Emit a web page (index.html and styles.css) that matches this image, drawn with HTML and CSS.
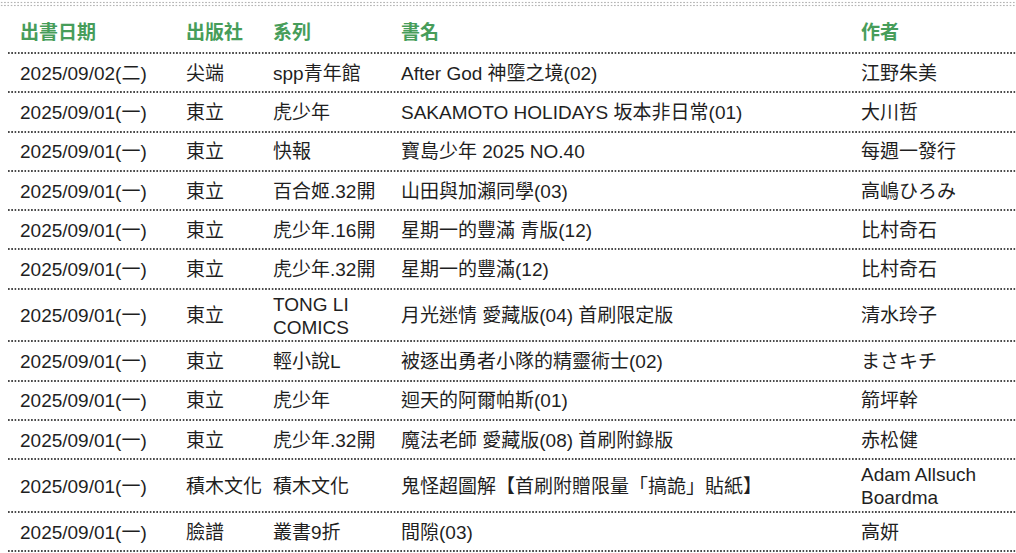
FILE: index.html
```html
<!DOCTYPE html>
<html lang="zh-Hant">
<head>
<meta charset="utf-8">
<title>新書列表</title>
<link rel="stylesheet" href="styles.css">
</head>
<body>
<div class="top-dots"></div>
<table class="list">
  <colgroup>
    <col class="c-date"><col class="c-pub"><col class="c-series"><col class="c-title"><col class="c-author">
  </colgroup>
  <thead>
    <tr><th>出書日期</th><th>出版社</th><th>系列</th><th>書名</th><th>作者</th></tr>
  </thead>
  <tbody>
    <tr><td>2025/09/02(二)</td><td>尖端</td><td>spp青年館</td><td>After God 神墮之境(02)</td><td>江野朱美</td></tr>
    <tr><td>2025/09/01(一)</td><td>東立</td><td>虎少年</td><td>SAKAMOTO HOLIDAYS 坂本非日常(01)</td><td>大川哲</td></tr>
    <tr><td>2025/09/01(一)</td><td>東立</td><td>快報</td><td>寶島少年 2025 NO.40</td><td>每週一發行</td></tr>
    <tr><td>2025/09/01(一)</td><td>東立</td><td>百合姬.32開</td><td>山田與加瀨同學(03)</td><td>高嶋ひろみ</td></tr>
    <tr><td>2025/09/01(一)</td><td>東立</td><td>虎少年.16開</td><td>星期一的豐滿 青版(12)</td><td>比村奇石</td></tr>
    <tr><td>2025/09/01(一)</td><td>東立</td><td>虎少年.32開</td><td>星期一的豐滿(12)</td><td>比村奇石</td></tr>
    <tr><td>2025/09/01(一)</td><td>東立</td><td>TONG LI COMICS</td><td>月光迷情 愛藏版(04) 首刷限定版</td><td>清水玲子</td></tr>
    <tr><td>2025/09/01(一)</td><td>東立</td><td>輕小說L</td><td>被逐出勇者小隊的精靈術士(02)</td><td>まさキチ</td></tr>
    <tr><td>2025/09/01(一)</td><td>東立</td><td>虎少年</td><td>迴天的阿爾帕斯(01)</td><td>箭坪幹</td></tr>
    <tr><td>2025/09/01(一)</td><td>東立</td><td>虎少年.32開</td><td>魔法老師 愛藏版(08) 首刷附錄版</td><td>赤松健</td></tr>
    <tr><td>2025/09/01(一)</td><td>積木文化</td><td>積木文化</td><td>鬼怪超圖解【首刷附贈限量「搞詭」貼紙】</td><td>Adam Allsuch Boardma</td></tr>
    <tr><td>2025/09/01(一)</td><td>臉譜</td><td>叢書9折</td><td>間隙(03)</td><td>高妍</td></tr>
  </tbody>
</table>
</body>
</html>
```
FILE: styles.css
```css
html, body {
  margin: 0;
  padding: 0;
  background: #ffffff;
}
body {
  font-family: "Liberation Sans", Arial, "Noto Sans CJK TC", sans-serif;
  font-size: 19px;
  color: #1f1f1f;
  overflow: hidden;
}
.top-dots {
  height: 6px;
  margin-top: 1px;
  margin-bottom: 1px;
  background-image: radial-gradient(circle, #b5b5b5 0.8px, transparent 1.1px);
  background-size: 3.3px 3px;
}
.list {
  margin-left: 8px;
  width: 1008px;
  border-collapse: collapse;
  table-layout: fixed;
}
.c-date { width: 166px; }
.c-pub { width: 87px; }
.c-series { width: 128px; }
.c-title { width: 460px; }
.c-author { width: 167px; }
.list th,
.list td {
  text-align: left;
  padding: 2px 0 2px 12px;
  line-height: 23px;
  vertical-align: middle;
  white-space: normal;
}
.list tr {
  background-image: linear-gradient(to right, #4a4a4a 50%, transparent 50%);
  background-size: 3.3px 2px;
  background-repeat: repeat-x;
  background-position: left bottom;
}
.list th {
  color: #479d5a;
  font-weight: bold;
  height: 46px;
  padding-top: 12px;
  padding-bottom: 9px;
  box-sizing: border-box;
}
.list td {
  height: 39.3px;
  box-sizing: border-box;
  padding-top: 3px;
  padding-bottom: 3.5px;
}
.list td:nth-child(2) {
  white-space: nowrap;
}
```
